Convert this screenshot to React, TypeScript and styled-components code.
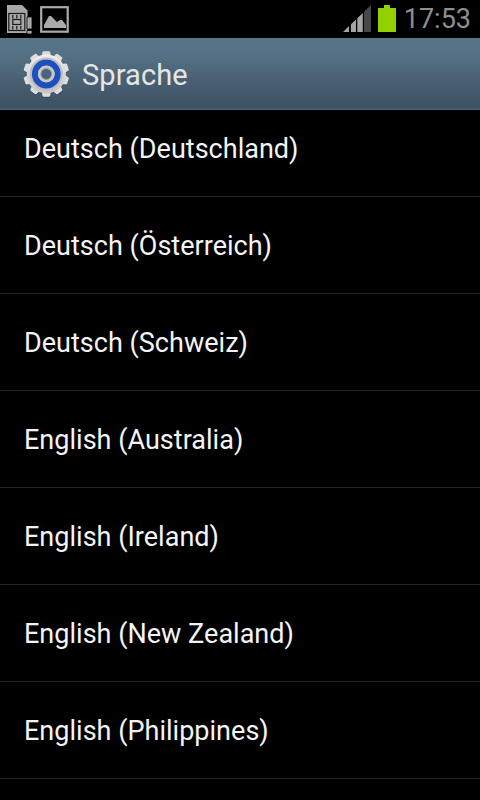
import styled, {createGlobalStyle} from 'styled-components'
import * as React from 'react'

const GlobalStyle = createGlobalStyle`
  body {
    margin: 0;
    background: #000;
    font-family: Roboto, 'Liberation Sans', sans-serif;
  }
`

const Screen = styled.div`
  display: flex;
  flex-direction: column;
  width: 480px;
  height: 800px;
  overflow: hidden;
  background: #000;
`

const StatusBar = styled.header`
  flex: none;
  display: flex;
  justify-content: space-between;
  height: 38px;
  box-sizing: border-box;
  padding: 0 9px 0 6px;
`

const StatusGroup = styled.div<{ gap: number }>`
  display: flex;
  gap: ${p => p.gap}px;
  > svg {
    display: block;
  }
`

const Clock = styled.time`
  width: 68px;
  font-size: 27px;
  font-weight: 400;
  line-height: 38px;
  text-align: right;
  white-space: nowrap;
  color: #8e8e8e;
`

const TitleBar = styled.div`
  flex: none;
  display: flex;
  align-items: center;
  gap: 12px;
  height: 72px;
  box-sizing: border-box;
  padding: 0 22px;
  border-bottom: 1px solid #4c6880;
  background: linear-gradient(#587489 0%, #567286 20%, #405466 88%, #405466 100%);
  > svg {
    display: block;
  }
`

const Title = styled.h1`
  margin: 0;
  padding-top: 2px;
  font-size: 29px;
  font-weight: 400;
  line-height: 32px;
  letter-spacing: .1px;
  color: #e6e6e6;
`

const LanguageList = styled.ul`
  flex: 1;
  display: flex;
  flex-direction: column;
  justify-content: flex-start;
  min-height: 0;
  margin: 0;
  padding: 0;
  overflow: hidden;
  list-style: none;
  > li:first-child {
    margin-top: -10px;
  }
`

const LanguageItem = styled.li`
  flex: none;
  height: 97px;
  box-sizing: border-box;
  padding: 1px 24px 0;
  border-bottom: 1px solid #252525;
  font-size: 27px;
  line-height: 97px;
  letter-spacing: .02px;
  color: #f4f4f4;
`

const SimIcon = () => (
  <svg width="27" height="38" viewBox="0 0 27 38">
    <path d="M1 5H16L21.5 10.5V33H1Z" fill="#a8a8a8"/>
    <g fill="none" stroke="#1a1a1a" strokeWidth="1.2">
      <rect x="2.8" y="13.5" width="16" height="17"/>
      <path d="M6.8 15V18.5M10.8 15V18.5M14.8 15V18.5M6.8 26V29.5M10.8 26V29.5M14.8 26V29.5"/>
      <rect x="6.8" y="19.5" width="8" height="5"/>
    </g>
    <path d="M21 17H26V29H21ZM21 30.5H26V34H21Z" fill="#a8a8a8" stroke="#000" strokeWidth=".8"/>
  </svg>
)

const PictureIcon = () => (
  <svg width="29" height="38" viewBox="0 0 29 38">
    <rect x="1.2" y="7.2" width="26.5" height="24.5" fill="none" stroke="#aaa" strokeWidth="2.2"/>
    <path d="M4 28V25L9 16H11L17 22L20 20H22L26 25V28Z" fill="#aaa"/>
  </svg>
)

const SignalIcon = () => (
  <svg width="28" height="38" viewBox="0 0 28 38">
    <path d="M0 32L6 26V32ZM8 32V24.3L13 19.5V32ZM14.3 32V18.2L19.8 13V32Z" fill="#a4a4a4"/>
    <path d="M21 32V11.7L28 5V32Z" fill="#484848"/>
  </svg>
)

const BatteryIcon = () => (
  <svg width="18" height="38" viewBox="0 0 18 38">
    <path d="M0 8H6V5H12V8H18V32H0Z" fill="#92d000"/>
  </svg>
)

const teeth = Array.from({length: 10}, (_, i) => i * 36)

const GearIcon = () => (
  <svg width="48" height="48" viewBox="-24.3 -24 48 48">
    <defs>
      <linearGradient id="metal" x1="0" y1="0" x2="0" y2="1">
        <stop offset="0" stopColor="#ededed"/>
        <stop offset="1" stopColor="#c6c6c6"/>
      </linearGradient>
    </defs>
    <g fill="#2d3f4c" opacity=".45" transform="translate(0 1)">
      <circle r="19.5"/>
      {teeth.map(a => <path key={a} d="M-4.6 -18L-3.8 -22Q-3.5 -23 -2.5 -23H2.5Q3.5 -23 3.8 -22L4.6 -18Z" transform={`rotate(${a})`}/>)}
    </g>
    <g fill="#dedede">
      {teeth.map(a => <path key={a} d="M-4.6 -18L-3.8 -22Q-3.5 -22.8 -2.5 -22.8H2.5Q3.5 -22.8 3.8 -22L4.6 -18Z" transform={`rotate(${a})`}/>)}
    </g>
    <circle r="19.6" fill="url(#metal)"/>
    <circle r="15.6" fill="none" stroke="#bdbdbd" strokeWidth="2"/>
    <circle r="11.3" fill="none" stroke="#1c50c0" strokeWidth="6.2"/>
    <circle r="6.8" fill="#49637a" stroke="#c9c9c4" strokeWidth="3.2"/>
    <circle r="5.4" fill="none" stroke="#868d90" strokeWidth=".8"/>
  </svg>
)

const languages = [
  'Deutsch (Deutschland)',
  'Deutsch (Österreich)',
  'Deutsch (Schweiz)',
  'English (Australia)',
  'English (Ireland)',
  'English (New Zealand)',
  'English (Philippines)'
]

const App: React.FC = () => (
  <Screen>
    <GlobalStyle/>
    <StatusBar>
      <StatusGroup gap={7}>
        <SimIcon/>
        <PictureIcon/>
      </StatusGroup>
      <StatusGroup gap={7}>
        <SignalIcon/>
        <BatteryIcon/>
        <Clock>17:53</Clock>
      </StatusGroup>
    </StatusBar>
    <TitleBar>
      <GearIcon/>
      <Title>Sprache</Title>
    </TitleBar>
    <LanguageList>
      {languages.map(name => <LanguageItem key={name}>{name}</LanguageItem>)}
    </LanguageList>
  </Screen>
)

export default App
